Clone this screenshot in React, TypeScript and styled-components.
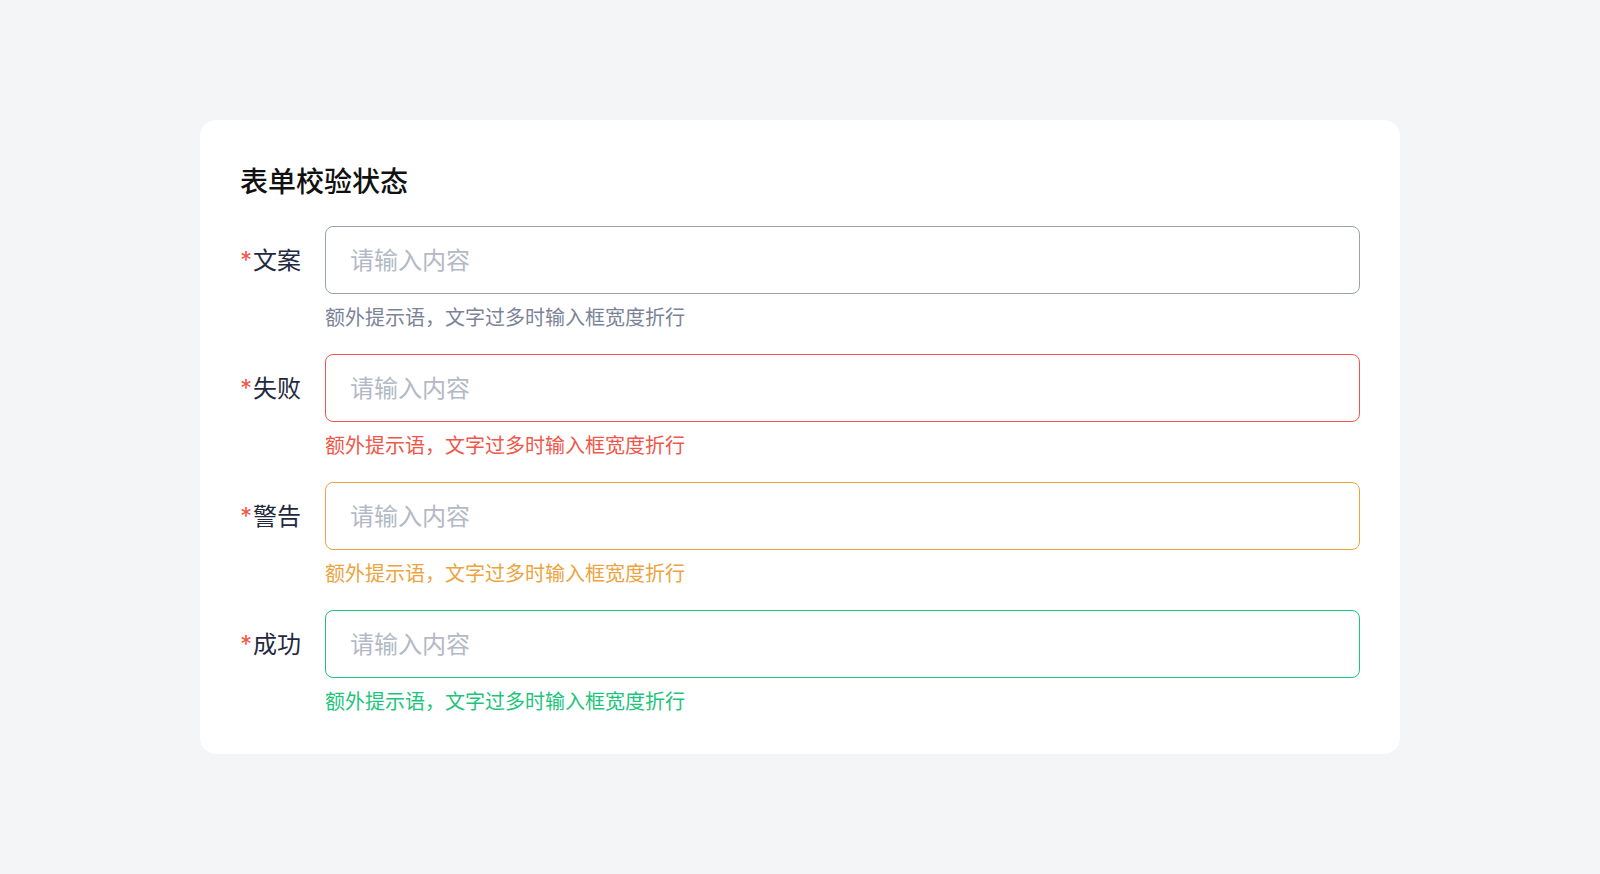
import React from 'react';
import styled, { createGlobalStyle } from 'styled-components';

type Status = 'default' | 'error' | 'warning' | 'success';

const borderColors: Record<Status, string> = {
  default: '#9aa1b1',
  error: '#f0574a',
  warning: '#eba440',
  success: '#1ec47c',
};

const helpColors: Record<Status, string> = {
  default: '#7b8398',
  error: '#f0574a',
  warning: '#eba440',
  success: '#1ec47c',
};

const fields: { label: string; status: Status }[] = [
  { label: '文案', status: 'default' },
  { label: '失败', status: 'error' },
  { label: '警告', status: 'warning' },
  { label: '成功', status: 'success' },
];

const App: React.FC = () => {
  return (
    <>
      <GlobalStyle />
      <Page>
        <Card>
          <Title>表单校验状态</Title>
          <Form>
            {fields.map((f) => (
              <Row key={f.label}>
                <Label>
                  <Required>*</Required>
                  {f.label}
                </Label>
                <Field>
                  <Input $status={f.status} placeholder="请输入内容" />
                  <Help $status={f.status}>额外提示语，文字过多时输入框宽度折行</Help>
                </Field>
              </Row>
            ))}
          </Form>
        </Card>
      </Page>
    </>
  );
};

const GlobalStyle = createGlobalStyle`
  html, body {
    margin: 0;
    padding: 0;
    background: #f4f5f7;
    font-family: Inter, "Noto Sans CJK SC", sans-serif;
  }
`;

const Page = styled.div`
  min-height: 874px;
  box-sizing: border-box;
  padding: 120px 200px;
`;

const Card = styled.div`
  background: #ffffff;
  border-radius: 16px;
  padding: 40px 40px 38px;
`;

const Title = styled.h2`
  margin: 2px 0 24px;
  font-size: 28px;
  line-height: 40px;
  font-weight: 500;
  color: #111111;
`;

const Form = styled.div`
  display: flex;
  flex-direction: column;
  gap: 22px;
`;

const Row = styled.div`
  display: flex;
  align-items: flex-start;
  gap: 24px;
`;

const Label = styled.div`
  width: 61px;
  flex-shrink: 0;
  height: 68px;
  padding-bottom: 3px;
  box-sizing: border-box;
  display: flex;
  align-items: center;
  font-size: 24px;
  color: #1f2940;
  white-space: nowrap;
`;

const Required = styled.span`
  color: #f0574a;
  font-size: 24px;
  margin-right: 1px;
  position: relative;
  top: 2px;
`;

const Field = styled.div`
  flex: 1;
  display: flex;
  flex-direction: column;
  gap: 10px;
`;

const Input = styled.input<{ $status: Status }>`
  box-sizing: border-box;
  width: 100%;
  height: 68px;
  padding: 0 24px;
  border: 1px solid ${(p) => borderColors[p.$status]};
  border-radius: 8px;
  font-family: inherit;
  font-size: 24px;
  color: #1f2940;
  outline: none;
  background: #ffffff;

  &::placeholder {
    color: #b3b9c7;
  }
`;

const Help = styled.div<{ $status: Status }>`
  font-size: 20px;
  line-height: 28px;
  color: ${(p) => helpColors[p.$status]};
`;

export default App;
